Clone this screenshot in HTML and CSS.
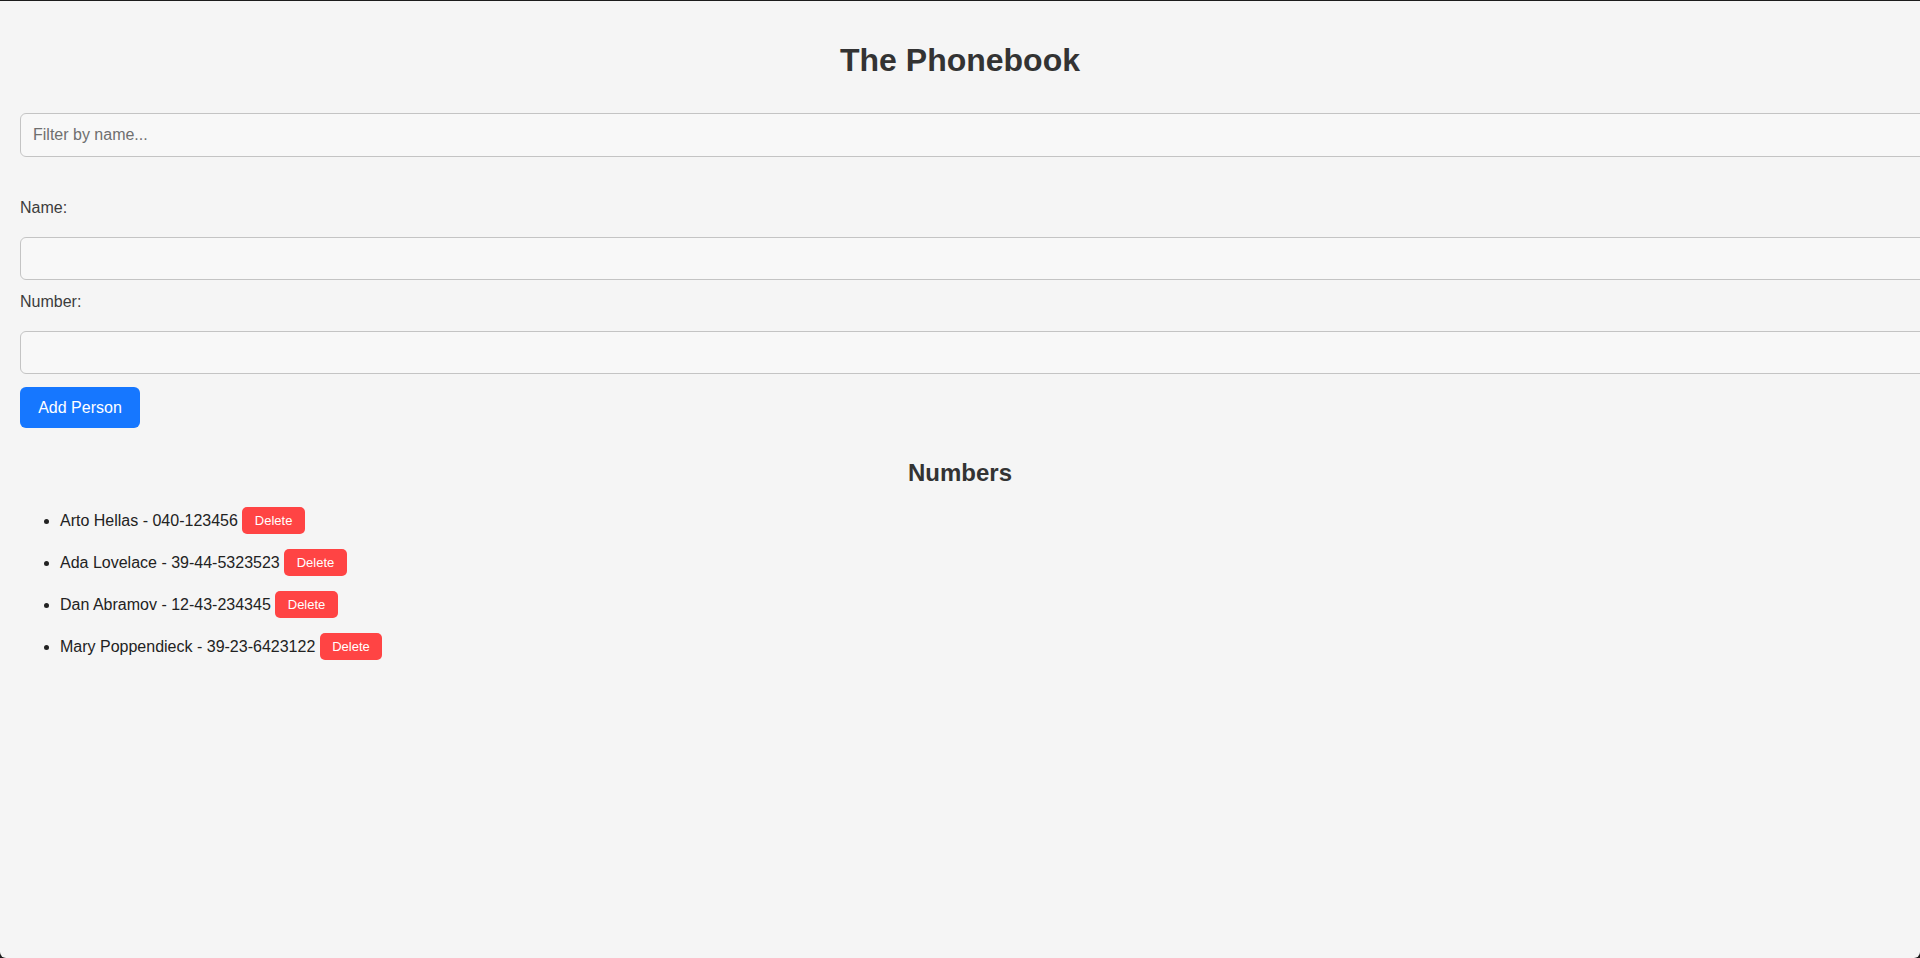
FILE: index.html
```html
<!DOCTYPE html>
<html lang="en">
<head>
<meta charset="utf-8">
<title>The Phonebook</title>
<link rel="stylesheet" href="styles.css">
</head>
<body>
<div class="app">
  <h1 class="title">The Phonebook</h1>
  <div class="filter">
    <input class="field" type="text" placeholder="Filter by name...">
  </div>
  <form class="person-form">
    <div class="form-row">
      <label class="label">Name:</label>
      <input class="field" type="text">
    </div>
    <div class="form-row">
      <label class="label">Number:</label>
      <input class="field" type="text">
    </div>
    <div class="form-actions">
      <button type="button" class="btn-primary">Add Person</button>
    </div>
  </form>
  <h2 class="subtitle">Numbers</h2>
  <ul class="people">
    <li class="person">Arto Hellas - 040-123456 <button type="button" class="btn-delete">Delete</button></li>
    <li class="person">Ada Lovelace - 39-44-5323523 <button type="button" class="btn-delete">Delete</button></li>
    <li class="person">Dan Abramov - 12-43-234345 <button type="button" class="btn-delete">Delete</button></li>
    <li class="person">Mary Poppendieck - 39-23-6423122 <button type="button" class="btn-delete">Delete</button></li>
  </ul>
</div>
</body>
</html>
```
FILE: styles.css
```css
html {
  background: #1c1c1c;
  overflow: hidden;
}
body {
  margin: 1px 0 0 0;
  min-height: 957px;
  box-sizing: border-box;
  background: #f5f5f5;
  border-radius: 0 0 6px 6px;
  font-family: "Liberation Sans", Arial, Helvetica, sans-serif;
  color: #333;
  overflow: hidden;
}
.app {
  padding: 0 20px;
}
.title {
  margin: 0;
  padding-top: 41px;
  font-size: 32px;
  font-weight: bold;
  text-align: center;
  color: #333;
}
.filter {
  margin-top: 34px;
}
.field {
  display: block;
  box-sizing: border-box;
  width: calc(100% + 26px);
  height: 43px;
  padding: 0 12px;
  border: 1px solid #c4c4c4;
  border-radius: 6px;
  background: #f8f8f8;
  font-family: inherit;
  font-size: 16px;
  color: #333;
  outline: none;
}
.filter .field {
  height: 44px;
}
.field::placeholder {
  color: #6f6f6f;
}
.person-form {
  margin-top: 42px;
  display: flex;
  flex-direction: column;
}
.form-row {
  display: flex;
  flex-direction: column;
  margin-bottom: 13px;
}
.label {
  font-size: 16px;
  line-height: 18px;
  color: #3c3c3c;
  margin-bottom: 20px;
}
.form-actions {
  display: flex;
}
.btn-primary {
  height: 41px;
  width: 120px;
  border: none;
  border-radius: 6px;
  background: #1677ff;
  color: #fff;
  font-family: inherit;
  font-size: 16px;
  cursor: pointer;
}
.subtitle {
  margin: 31px 0 0 0;
  font-size: 24px;
  line-height: 28px;
  font-weight: bold;
  text-align: center;
  color: #333;
}
.people {
  margin: 20px 0 0 0;
  padding-left: 40px;
  color: #222;
  font-size: 16px;
}
.person {
  height: 27px;
  line-height: 27px;
  margin-bottom: 15px;
}
.btn-delete {
  height: 27px;
  padding: 0 12.5px;
  border: none;
  border-radius: 5px;
  background: #ff4444;
  color: #fff;
  font-family: inherit;
  font-size: 13px;
  line-height: 27px;
  vertical-align: top;
  cursor: pointer;
}
```
